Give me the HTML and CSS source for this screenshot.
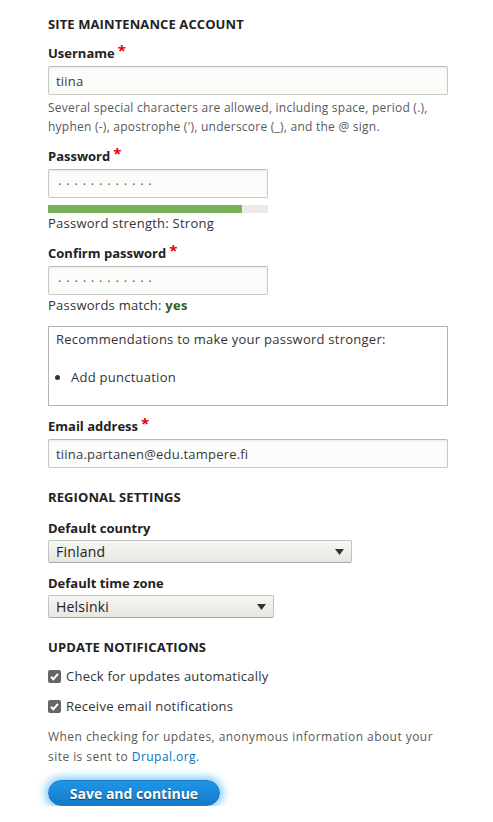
FILE: index.html
```html
<!DOCTYPE html>
<html lang="en">
<head>
<meta charset="utf-8">
<title>Configure site</title>
<link rel="stylesheet" href="styles.css">
</head>
<body>
<form class="page">
  <h2 class="section-title">Site maintenance account</h2>

  <div class="form-item">
    <label class="label">Username<span class="req">*</span></label>
    <input class="text-input wide" type="text" value="tiina">
    <p class="description">Several special characters are allowed, including space, period (.), hyphen (-), apostrophe ('), underscore (_), and the @ sign.</p>
  </div>

  <div class="form-item">
    <label class="label">Password<span class="req">*</span></label>
    <input class="text-input narrow dots" type="text" value="············">
    <div class="strength"><div class="strength-fill" style="width: 88%"></div></div>
    <p class="status">Password strength: Strong</p>
  </div>

  <div class="form-item">
    <label class="label">Confirm password<span class="req">*</span></label>
    <input class="text-input narrow dots" type="text" value="············">
    <p class="status">Passwords match: <span class="ok">yes</span></p>
  </div>

  <div class="suggestions">
    <p class="sugg-title">Recommendations to make your password stronger:</p>
    <ul class="sugg-list">
      <li>Add punctuation</li>
    </ul>
  </div>

  <div class="form-item email-item">
    <label class="label">Email address<span class="req">*</span></label>
    <input class="text-input wide" type="text" value="tiina.partanen@edu.tampere.fi">
  </div>

  <h2 class="section-title spaced">Regional settings</h2>

  <div class="select-item">
    <label class="label tight">Default country</label>
    <div class="select country"><span>Finland</span><svg class="arrow" width="9" height="6" viewBox="0 0 9 6"><path d="M0 0H9L4.5 6Z" fill="#333"/></svg></div>
  </div>

  <div class="select-item second">
    <label class="label tight">Default time zone</label>
    <div class="select zone"><span>Helsinki</span><svg class="arrow" width="9" height="6" viewBox="0 0 9 6"><path d="M0 0H9L4.5 6Z" fill="#333"/></svg></div>
  </div>

  <h2 class="section-title spaced">Update notifications</h2>

  <div class="check-row first">
    <span class="checkbox"><svg width="13" height="13" viewBox="0 0 13 13"><path d="M3 6.8L5.3 9.2L10 3.8" fill="none" stroke="#fff" stroke-width="2"/></svg></span>
    <span>Check for updates automatically</span>
  </div>
  <div class="check-row">
    <span class="checkbox"><svg width="13" height="13" viewBox="0 0 13 13"><path d="M3 6.8L5.3 9.2L10 3.8" fill="none" stroke="#fff" stroke-width="2"/></svg></span>
    <span>Receive email notifications</span>
  </div>

  <p class="description note"><span>When checking for updates, anonymous information about your</span> <span>site is sent to <a href="#">Drupal.org</a>.</span></p>

  <button class="button" type="button">Save and continue</button>
</form>
</body>
</html>
```

FILE: styles.css
```css
html, body {
  margin: 0;
  padding: 0;
  background: #fff;
}

body {
  font-family: "Open Sans", "DejaVu Sans", sans-serif;
  font-size: 13px;
  color: #333;
  letter-spacing: 0.25px;
}

.page {
  width: 400px;
  padding: 14px 0 0 48px;
}

.section-title {
  margin: 0;
  font-size: 13px;
  line-height: 20px;
  height: 20px;
  font-weight: bold;
  text-transform: uppercase;
  color: #222;
  letter-spacing: 0.1px;
}

.section-title.spaced {
  margin-top: 19px;
}

.form-item {
  margin-top: 10px;
}

.section-title + .form-item {
  margin-top: 9px;
}

.email-item {
  margin-top: 10px;
}

.label {
  display: block;
  font-weight: bold;
  line-height: 20px;
  height: 20px;
  margin-bottom: 3px;
  color: #222;
  letter-spacing: 0;
}

.label.tight {
  margin-bottom: 2px;
}

.req {
  color: #e00000;
  font-size: 15px;
  line-height: 0;
  margin-left: 3px;
  position: relative;
  top: -2px;
}

.text-input {
  display: block;
  box-sizing: border-box;
  height: 29px;
  margin: 0;
  padding: 0 7px;
  border: 1px solid #c9c9c4;
  border-top-color: #b8b8b4;
  border-radius: 2px;
  background: #fcfcfa;
  font-family: "Open Sans", "DejaVu Sans", sans-serif;
  font-size: 13px;
  letter-spacing: 0.2px;
  color: #3a3a3a;
  box-shadow: inset 0 1px 2px rgba(0,0,0,0.08);
}

.wide { width: 400px; }
.narrow { width: 220px; }

.dots {
  letter-spacing: 4.8px;
  padding-left: 9px;
  color: #555;
}

.description {
  margin: 3px 0 0;
  font-size: 12px;
  line-height: 19px;
  color: #595959;
  letter-spacing: 0.24px;
}

.strength {
  width: 220px;
  height: 8px;
  margin-top: 7px;
  background: #ebeae4;
}

.strength-fill {
  height: 100%;
  background: #77b259;
}

.status {
  margin: 0;
  line-height: 20px;
}

.ok {
  color: #325e1c;
  font-weight: bold;
}

.suggestions {
  box-sizing: border-box;
  width: 400px;
  margin-top: 11px;
  padding: 3px 7px 18px;
  border: 1px solid #b4b4b4;
}

.sugg-title {
  margin: 0;
  line-height: 19px;
}

.sugg-list {
  margin: 19px 0 0;
  padding-left: 15px;
  line-height: 19px;
}

.select-item {
  margin-top: 11px;
}

.select-item.second {
  margin-top: 10px;
}

.select {
  box-sizing: border-box;
  height: 23px;
  display: flex;
  align-items: center;
  justify-content: space-between;
  padding: 0 7px 0 7px;
  border: 1px solid #c3c3bf;
  border-bottom-color: #a8a8a4;
  border-radius: 2px;
  background: linear-gradient(to bottom, #f6f6f3, #e7e7e2);
  font-size: 14px;
  letter-spacing: 0.2px;
  color: #222;
}

.country { width: 304px; }
.zone { width: 226px; }

.check-row {
  display: flex;
  align-items: center;
  gap: 5px;
  line-height: 20px;
  height: 20px;
  margin-top: 10px;
}

.check-row.first {
  margin-top: 9px;
}

.checkbox {
  width: 13px;
  height: 13px;
  border-radius: 2px;
  background: #666;
  display: flex;
}

.note {
  margin-top: 11px;
  line-height: 20px;
  letter-spacing: 0.45px;
}

.note a {
  color: #0074bd;
  text-decoration: none;
}

.button {
  display: block;
  margin-top: 13px;
  width: 172px;
  height: 26px;
  border: 1px solid #1a7cc9;
  border-radius: 20px;
  background: linear-gradient(to bottom, #1f96e6, #1679c8);
  color: #fff;
  font-family: "Open Sans", "DejaVu Sans", sans-serif;
  font-size: 14px;
  font-weight: bold;
  letter-spacing: 0;
  text-shadow: 0 1px 1px rgba(0,0,0,0.5);
  box-shadow: 0 0 8px 3px rgba(51, 170, 255, 0.6);
  padding: 0;
}
```
